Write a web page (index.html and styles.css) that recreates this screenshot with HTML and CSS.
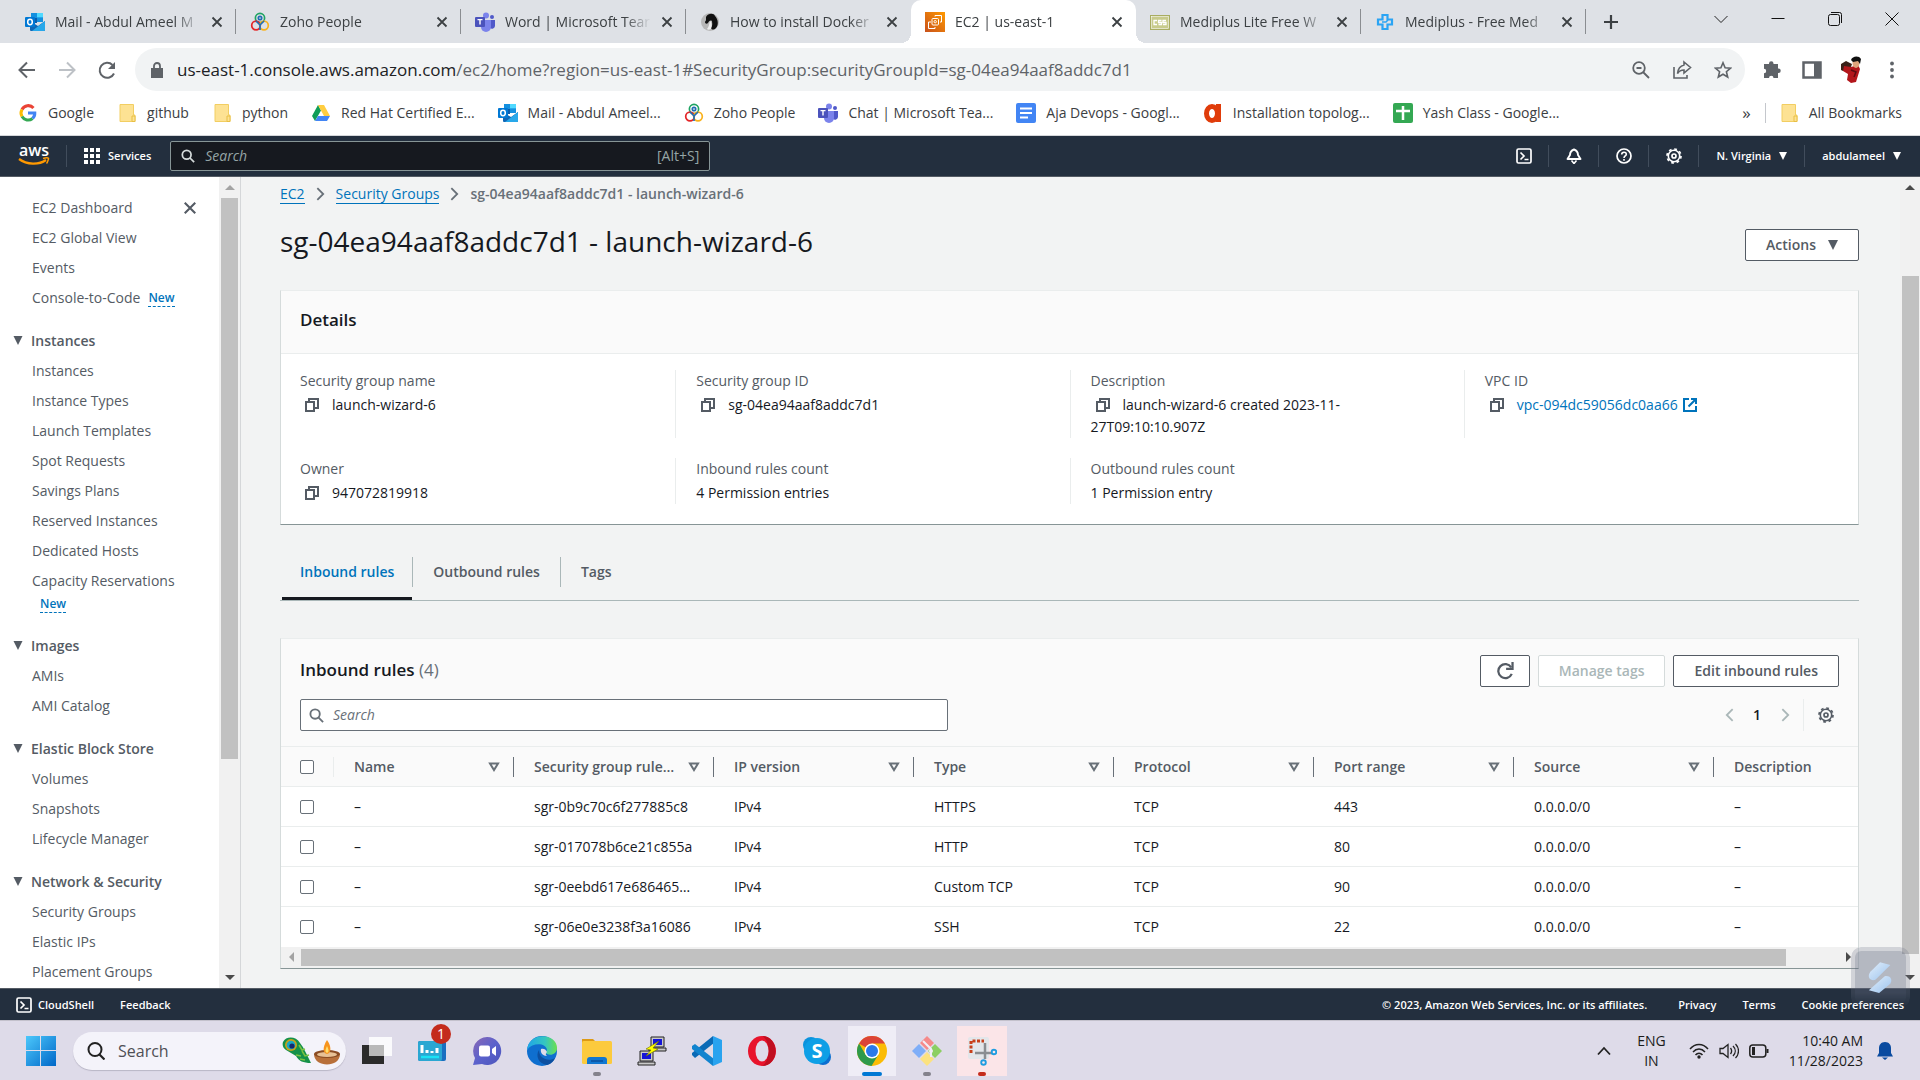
FILE: index.html
```
<!DOCTYPE html>
<html lang="en">
<head>
<meta charset="utf-8">
<meta name="viewport" content="width=device-width, initial-scale=1">
<title>EC2 | us-east-1</title>
<link rel="stylesheet" href="styles.css">
</head>
<body>
<svg class="sprite" aria-hidden="true">
  <symbol id="i-outlook" viewBox="0 0 20 20"><path fill="#1490df" d="M6 1h12v9H6z"/><path fill="#28a8ea" d="M12 1h6v5h-6z"/><path fill="#0a5cad" d="M6 6h6v5H6z"/><path fill="#50d9ff" d="M12 1h6v4h-6z"/><path fill="#1066b5" d="M5 9l8 5 7-5v9a1 1 0 0 1-1 1H6a1 1 0 0 1-1-1z"/><path fill="#28a8ea" d="M20 9v9a1 1 0 0 1-1 1H7z"/><rect x="0" y="5" width="10" height="10" rx="1" fill="#0078d4"/><ellipse cx="5" cy="10" rx="2.3" ry="2.7" fill="none" stroke="#fff" stroke-width="1.5"/></symbol>
  <symbol id="i-zoho" viewBox="0 0 20 20"><g fill="none" stroke-width="1.7"><circle cx="10" cy="6" r="4.6" stroke="#1fa463"/><circle cx="6" cy="13.5" r="4.3" stroke="#e42527"/><circle cx="14" cy="13.5" r="4.3" stroke="#f9b21d"/><circle cx="10" cy="6" r="1.7" stroke="#226db4"/><path d="M10 18v-6M10 13L6 9M10 13l4-4" stroke="#226db4"/></g></symbol>
  <symbol id="i-teams" viewBox="0 0 20 20"><circle cx="17" cy="5" r="2" fill="#5059c9"/><path fill="#5059c9" d="M14 8h6v6a3 3 0 0 1-5 2z"/><circle cx="11" cy="3.5" r="3" fill="#7b83eb"/><path fill="#7b83eb" d="M6 8h10v7a5 5 0 0 1-10 0z"/><rect y="5" width="10" height="10" rx="1" fill="#4b53bc"/><path d="M2.5 7.6h5M5 7.6v5" stroke="#fff" stroke-width="1.4"/></symbol>
  <symbol id="i-folder" viewBox="0 0 20 20"><path fill="#fde293" stroke="#f2ce62" d="M3 1.500h13.500V12L18 12v6.500H3z"/><path fill="#fde293" stroke="#e8bf45" d="M15 13h3v5.500h-3z"/></symbol>
  <symbol id="i-copy" viewBox="0 0 16 16"><g fill="none" stroke="#545b64" stroke-width="2"><path d="M2 5h8v9H2z"/><path d="M5 5V2h9v9h-4"/></g></symbol>
  <symbol id="i-shell" viewBox="0 0 16 16"><rect x="1" y="1" width="14" height="14" rx="1.500" fill="none" stroke="#fff" stroke-width="1.700"/><path d="M4.500 4.500L8 8l-3.500 3.500M8.500 11.500h4" fill="none" stroke="#fff" stroke-width="1.700"/></symbol>
  <symbol id="i-gear" viewBox="0 0 16 16"><g fill="none" stroke="currentColor"><circle cx="8" cy="8" r="5.700" stroke-width="1.600"/><circle cx="8" cy="8" r="7" stroke-width="1.700" stroke-dasharray="2.750 2.750"/><circle cx="8" cy="8" r="2" stroke-width="1.700"/></g></symbol>
  <symbol id="i-search" viewBox="0 0 16 16"><circle cx="6.500" cy="6.500" r="5" fill="none" stroke="currentColor" stroke-width="2"/><path d="M10 10l5 5" stroke="currentColor" stroke-width="2"/></symbol>
  <symbol id="i-x" viewBox="0 0 12 12"><path d="M1.500 1.500l9 9M10.500 1.500l-9 9" stroke="currentColor" stroke-width="1.800"/></symbol>
  <symbol id="i-down" viewBox="0 0 10 10"><path d="M0 0h10L5 10z" fill="currentColor"/></symbol>
  <symbol id="i-filter" viewBox="0 0 12 10"><path d="M2 1.500h8L6 8z" fill="none" stroke="#687078" stroke-width="2"/></symbol>
  <symbol id="i-chev" viewBox="0 0 10 16"><path d="M1.500 1.500L8 8l-6.500 6.500" fill="none" stroke="currentColor" stroke-width="2"/></symbol>
</svg>

<header class="browser">
  <div class="tabstrip">
    <div class="tab"><svg class="ic"><use href="#i-outlook"/></svg><span class="tab-title">Mail - Abdul Ameel M</span><button class="tab-x" aria-label="Close tab"><svg><use href="#i-x"/></svg></button></div>
    <div class="tab"><svg class="ic"><use href="#i-zoho"/></svg><span class="tab-title">Zoho People</span><button class="tab-x" aria-label="Close tab"><svg><use href="#i-x"/></svg></button></div>
    <div class="tab"><svg class="ic"><use href="#i-teams"/></svg><span class="tab-title">Word | Microsoft Tear</span><button class="tab-x" aria-label="Close tab"><svg><use href="#i-x"/></svg></button></div>
    <div class="tab before"><svg class="ic" viewBox="0 0 20 20"><circle cx="10" cy="10" r="9" fill="#b7b7b7"/><path d="M6 5c2-4 8-4 9-1 3 3 4 9 1 12-2 2-4 2-5 0 2-3 1-5 1-7-2-1-3 0-4 2-1 1-3 1-3-1 0-1 1-1 1-2z" fill="#111"/><path d="M10 9c2 1 2 5 1 8-2 1-3 1-4 0 2-2 2-5 3-8z" fill="#eee"/></svg><span class="tab-title">How to install Docker</span><button class="tab-x" aria-label="Close tab"><svg><use href="#i-x"/></svg></button></div>
    <div class="tab active"><svg class="ic" viewBox="0 0 20 20"><defs><linearGradient id="gaws" x1="0" y1="1" x2="1" y2="0"><stop stop-color="#c8511b"/><stop offset="1" stop-color="#f90"/></linearGradient></defs><path fill="url(#gaws)" d="M0 0h20v20H0z"/><g fill="none" stroke="#fff"><rect x="7" y="6.500" width="6.500" height="6.500" rx="1"/><path d="M10 4.500V3.500h6.500V10H15M6 10H3.500v6.500H10V15"/><circle cx="10.200" cy="9.700" r="1.200"/></g></svg><span class="tab-title">EC2 | us-east-1</span><button class="tab-x" aria-label="Close tab"><svg><use href="#i-x"/></svg></button></div>
    <div class="tab"><svg class="ic" viewBox="0 0 20 20"><rect y="3" width="20" height="15" fill="#a9ad62"/><rect x="1.500" y="4.500" width="17" height="12" fill="#c8cb8c" stroke="#fff" stroke-width=".6"/><path d="M7 8.500H4v4h3M11.500 8.500h-3v2h3v2h-3M16 8.500h-3v2h3v2h-3" fill="none" stroke="#fff" stroke-width="1.300"/></svg><span class="tab-title">Mediplus Lite Free W</span><button class="tab-x" aria-label="Close tab"><svg><use href="#i-x"/></svg></button></div>
    <div class="tab"><svg class="ic" viewBox="0 0 20 20"><path d="M7.500 3h5v4.500H17v5h-4.500V17h-5v-4.500H3v-5h4.500z" fill="none" stroke="#2aa4f4" stroke-width="2.200"/><path d="M7 10h4l2-2" fill="none" stroke="#2aa4f4" stroke-width="1.500"/></svg><span class="tab-title">Mediplus - Free Med</span><button class="tab-x" aria-label="Close tab"><svg><use href="#i-x"/></svg></button></div>
    <button class="newtab" aria-label="New tab"><svg width="16" height="16" viewBox="0 0 16 16"><path d="M8 1v14M1 8h14" stroke="#3c4043" stroke-width="2.200"/></svg></button>
    <div class="winctl">
      <button aria-label="Search tabs"><svg viewBox="0 0 14 14"><path d="M.5 4L7 10.500 13.500 4" fill="none" stroke="#222"/></svg></button>
      <button aria-label="Minimize"><svg viewBox="0 0 14 14"><path d="M.5 6.500h13" stroke="#111"/></svg></button>
      <button aria-label="Restore"><svg viewBox="0 0 14 14"><rect x=".5" y="2.500" width="11" height="11" rx="2" fill="none" stroke="#111"/><path d="M3 .5h8.500a2 2 0 0 1 2 2V11" fill="none" stroke="#111"/></svg></button>
      <button aria-label="Close"><svg viewBox="0 0 14 14"><path d="M.5 .5l13 13M13.500 .5l-13 13" stroke="#111"/></svg></button>
    </div>
  </div>

  <div class="toolbar">
    <button aria-label="Back"><svg width="18" height="18" viewBox="0 0 18 18"><path d="M17 9H2M9 1.500L1.500 9 9 16.500" fill="none" stroke="#5f6368" stroke-width="2"/></svg></button>
    <button aria-label="Forward"><svg width="18" height="18" viewBox="0 0 18 18"><path d="M1 9h15M9 1.500L16.500 9 9 16.500" fill="none" stroke="#bdc1c6" stroke-width="2"/></svg></button>
    <button aria-label="Reload"><svg width="20" height="20" viewBox="0 0 20 20"><path d="M17 13.500A7.500 7.500 0 1 1 15.500 5" fill="none" stroke="#5f6368" stroke-width="2"/><path d="M18 2v7h-7z" fill="#5f6368"/></svg></button>
    <div class="omnibox">
      <svg width="12" height="16" viewBox="0 0 12 16"><path d="M0 6h12v10H0z" fill="#5f6368"/><path d="M3 6V4a3 3 0 0 1 6 0v2" fill="none" stroke="#5f6368" stroke-width="1.800"/></svg>
      <p class="url"><b>us-east-1.console.aws.amazon.com</b>/ec2/home?region=us-east-1#SecurityGroup:securityGroupId=sg-04ea94aaf8addc7d1</p>
      <button aria-label="Zoom"><svg width="18" height="18" viewBox="0 0 18 18"><circle cx="7" cy="7" r="5.800" fill="none" stroke="#5f6368" stroke-width="1.800"/><path d="M11 11l6 6M4.500 7h5" stroke="#5f6368" stroke-width="1.800"/></svg></button>
      <button aria-label="Share"><svg width="20" height="20" viewBox="0 0 20 20"><path d="M2 7v11h13v-3" fill="none" stroke="#5f6368" stroke-width="1.600"/><path d="M12 2l6.500 5.500L12 13v-3c-3 0-5 1-6.500 3.500C6 9 8 6 12 5z" fill="none" stroke="#5f6368" stroke-width="1.600"/></svg></button>
      <button aria-label="Bookmark this tab"><svg width="18" height="18" viewBox="0 0 18 18"><path d="M9 1.800l2.100 5 5.400.4-4.100 3.500 1.300 5.300L9 13.200 4.300 16l1.300-5.300L1.500 7.200l5.400-.4z" fill="none" stroke="#5f6368" stroke-width="1.600"/></svg></button>
    </div>
    <button aria-label="Extensions"><svg width="20" height="20" viewBox="0 0 20 20"><path d="M7 3.500a2 2 0 0 1 4.500 0V4H16v4.500h.5a2.200 2.200 0 0 1 0 4.500H16V18h-4.500a2.200 2.200 0 0 0-4.500 0H2v-4.800a2 2 0 0 0 0-4.400V4h5z" fill="#5f6368"/></svg></button>
    <button aria-label="Side panel"><svg width="20" height="20" viewBox="0 0 20 20"><path d="M1.500 2.500h17v15h-17z" fill="#fff" stroke="#5f6368" stroke-width="2.500"/><path d="M12 2h7v16h-7z" fill="#5f6368"/></svg></button>
    <button aria-label="Profile"><svg width="26" height="28" viewBox="0 0 26 28"><path d="M3 10c3-2 7-1 9 1l7-2 2 4-4 13-5 1-4-3 1-6-5-3z" fill="#b3161b"/><path d="M2 8l5-3 6 3-1 3-7-1-1 5-2-1z" fill="#3a2018"/><ellipse cx="17" cy="7" rx="3.500" ry="5" fill="#e0a57c"/><path d="M12 4c1-4 8-5 10-1l-1 5-2-3-5 1z" fill="#111"/><path d="M12 14l5 2-2 5" fill="none" stroke="#5d0b10" stroke-width="1.500"/></svg></button>
    <button aria-label="Menu"><svg width="6" height="18" viewBox="0 0 6 18"><g fill="#5f6368"><circle cx="3" cy="2.500" r="1.900"/><circle cx="3" cy="9" r="1.900"/><circle cx="3" cy="15.500" r="1.900"/></g></svg></button>
  </div>

  <nav class="bookmarks" aria-label="Bookmarks">
    <a href="#"><svg class="ic" viewBox="0 0 20 20"><g fill="none" stroke-width="3"><path d="M15.500 5A7 7 0 0 0 4 6.500" stroke="#ea4335"/><path d="M4 6.500a7 7 0 0 0 0 7" stroke="#fbbc05"/><path d="M4 13.500a7 7 0 0 0 10.500 2" stroke="#34a853"/><path d="M14.500 15.500A7 7 0 0 0 16.800 10H10" stroke="#4285f4"/></g></svg>Google</a>
    <a href="#"><svg class="ic"><use href="#i-folder"/></svg>github</a>
    <a href="#"><svg class="ic"><use href="#i-folder"/></svg>python</a>
    <a href="#"><svg class="ic" viewBox="0 0 20 20"><path fill="#0f9d58" d="M7 2l3 5.500L4 18l-3-5z"/><path fill="#ffcd40" d="M7 2h6l6 11h-6z"/><path fill="#4285f4" d="M7 13h12l-3 5H4z"/></svg>Red Hat Certified E...</a>
    <a href="#"><svg class="ic"><use href="#i-outlook"/></svg>Mail - Abdul Ameel...</a>
    <a href="#"><svg class="ic"><use href="#i-zoho"/></svg>Zoho People</a>
    <a href="#"><svg class="ic"><use href="#i-teams"/></svg>Chat | Microsoft Tea...</a>
    <a href="#"><svg class="ic" viewBox="0 0 20 20"><rect width="20" height="20" rx="2" fill="#4285f4"/><path d="M4 5.500h12M4 10h12M4 14.500h8" stroke="#fff" stroke-width="2"/></svg>Aja Devops - Googl...</a>
    <a href="#"><svg class="ic" viewBox="0 0 20 20"><ellipse cx="9" cy="10.500" rx="5.500" ry="7" fill="none" stroke="#e03c0a" stroke-width="5"/><path d="M13 1h5v18h-5z" fill="#e03c0a"/></svg>Installation topolog...</a>
    <a href="#"><svg class="ic" viewBox="0 0 20 20"><rect width="20" height="20" rx="2" fill="#34a853"/><path d="M10 3v14M3 8h14" stroke="#fff" stroke-width="2.500"/></svg>Yash Class - Google...</a>
    <button class="more" aria-label="More bookmarks">»</button>
    <a class="all" href="#"><svg class="ic"><use href="#i-folder"/></svg>All Bookmarks</a>
  </nav>
</header>

<div class="console">
  <header class="awsbar">
    <a class="logo" href="#" aria-label="AWS"><svg width="32" height="24" viewBox="0 0 32 24"><text x="16" y="12" text-anchor="middle" class="logo-text">aws</text><path d="M1 15c8 6 20 6 27 1" fill="none" stroke="#f90" stroke-width="2.200"/><path d="M25 14.500c3-1 6-1 5.500.5s-1 3.500-2 4.500" fill="none" stroke="#f90" stroke-width="1.500"/></svg></a>
    <button class="services"><svg width="16" height="16" viewBox="0 0 16 16"><path d="M0 0h4v4H0zM6 0h4v4H6zM12 0h4v4h-4zM0 6h4v4H0zM6 6h4v4H6zM12 6h4v4h-4zM0 12h4v4H0zM6 12h4v4H6zM12 12h4v4h-4z" fill="#fff"/></svg>Services</button>
    <label class="awssearch"><svg width="14" height="14"><use href="#i-search"/></svg><input type="search" placeholder="Search" aria-label="Search"><span>[Alt+S]</span></label>
    <div class="awsright">
      <button class="sq" aria-label="CloudShell"><svg><use href="#i-shell"/></svg></button>
      <button class="sq" aria-label="Notifications"><svg viewBox="0 0 16 16"><path d="M8 1.500c-3 1-4 3-4 5.500L1.500 11h13L12 7c0-2.500-1-4.500-4-5.500z" fill="none" stroke="#fff" stroke-width="1.900" stroke-linejoin="round"/><path d="M5.500 12.500L8 15.500l2.500-3" fill="none" stroke="#fff" stroke-width="1.600"/></svg></button>
      <button class="sq" aria-label="Help"><svg viewBox="0 0 16 16"><circle cx="8" cy="8" r="7" fill="none" stroke="#fff" stroke-width="1.700"/><path d="M5.700 6.500C5.700 3.500 10.300 3.500 10.300 6.300 10.300 8 8 8 8 10M8 11v1.800" fill="none" stroke="#fff" stroke-width="1.600"/></svg></button>
      <button class="sq" aria-label="Settings"><svg><use href="#i-gear"/></svg></button>
      <button class="drop region">N. Virginia<svg><use href="#i-down"/></svg></button>
      <button class="drop">abdulameel<svg><use href="#i-down"/></svg></button>
    </div>
  </header>

  <div class="middle">
    <aside class="sidebar">
      <nav class="side-nav" aria-label="EC2">
        <ul>
          <li class="top"><a href="#">EC2 Dashboard</a><button aria-label="Close navigation"><svg><use href="#i-x"/></svg></button></li>
          <li><a href="#">EC2 Global View</a></li>
          <li><a href="#">Events</a></li>
          <li><a href="#">Console-to-Code</a><a class="new" href="#">New</a></li>
        </ul>
        <h2><svg><use href="#i-down"/></svg>Instances</h2>
        <ul>
          <li><a href="#">Instances</a></li>
          <li><a href="#">Instance Types</a></li>
          <li><a href="#">Launch Templates</a></li>
          <li><a href="#">Spot Requests</a></li>
          <li><a href="#">Savings Plans</a></li>
          <li><a href="#">Reserved Instances</a></li>
          <li><a href="#">Dedicated Hosts</a></li>
          <li><a href="#">Capacity Reservations</a></li>
          <li class="second"><a class="new" href="#">New</a></li>
        </ul>
        <h2><svg><use href="#i-down"/></svg>Images</h2>
        <ul>
          <li><a href="#">AMIs</a></li>
          <li><a href="#">AMI Catalog</a></li>
        </ul>
        <h2><svg><use href="#i-down"/></svg>Elastic Block Store</h2>
        <ul>
          <li><a href="#">Volumes</a></li>
          <li><a href="#">Snapshots</a></li>
          <li><a href="#">Lifecycle Manager</a></li>
        </ul>
        <h2><svg><use href="#i-down"/></svg>Network &amp; Security</h2>
        <ul>
          <li><a href="#">Security Groups</a></li>
          <li><a href="#">Elastic IPs</a></li>
          <li><a href="#">Placement Groups</a></li>
        </ul>
      </nav>
      <div class="vbar side-bar"><i class="arrow up dim"></i><i class="thumb"></i><i class="rest"></i><i class="arrow down"></i></div>
    </aside>

    <main>
      <nav class="crumbs" aria-label="Breadcrumb"><a href="#">EC2</a><svg><use href="#i-chev"/></svg><a href="#">Security Groups</a><svg><use href="#i-chev"/></svg><b>sg-04ea94aaf8addc7d1 - launch-wizard-6</b></nav>
      <div class="title-row">
        <h1>sg-04ea94aaf8addc7d1 - launch-wizard-6</h1>
        <button class="btn">Actions<svg><use href="#i-down"/></svg></button>
      </div>

      <section class="card">
        <h2 class="card-head">Details</h2>
        <dl class="details">
          <div><dt>Security group name</dt><dd><svg class="copy"><use href="#i-copy"/></svg>launch-wizard-6</dd></div>
          <div><dt>Security group ID</dt><dd><svg class="copy"><use href="#i-copy"/></svg>sg-04ea94aaf8addc7d1</dd></div>
          <div><dt>Description</dt><dd><svg class="copy"><use href="#i-copy"/></svg>launch-wizard-6 created 2023-11-<br>27T09:10:10.907Z</dd></div>
          <div><dt>VPC ID</dt><dd><svg class="copy"><use href="#i-copy"/></svg><a href="#">vpc-094dc59056dc0aa66<svg class="ext" viewBox="0 0 14 14"><path d="M6 1H1v12h12V8" fill="none" stroke="#0073bb" stroke-width="2"/><path d="M8 1h5v5M13 1L5.500 8.500" fill="none" stroke="#0073bb" stroke-width="2"/></svg></a></dd></div>
          <div><dt>Owner</dt><dd><svg class="copy"><use href="#i-copy"/></svg>947072819918</dd></div>
          <div><dt>Inbound rules count</dt><dd>4 Permission entries</dd></div>
          <div><dt>Outbound rules count</dt><dd>1 Permission entry</dd></div>
        </dl>
      </section>

      <div class="tabs" role="tablist">
        <button role="tab" aria-selected="true" class="on">Inbound rules</button><i></i>
        <button role="tab" aria-selected="false">Outbound rules</button><i></i>
        <button role="tab" aria-selected="false">Tags</button>
      </div>

      <section class="card rules">
        <div class="rules-head">
          <div class="line">
            <h2>Inbound rules <span>(4)</span></h2>
            <div class="actions">
              <button class="btn icon" aria-label="Refresh"><svg viewBox="0 0 16 16"><path d="M14 10.500A6.200 6.200 0 1 1 13.500 4.800" fill="none" stroke="#545b64" stroke-width="2"/><path d="M14.700 0v6H9" fill="none" stroke="#545b64" stroke-width="2"/></svg></button>
              <button class="btn" disabled>Manage tags</button>
              <button class="btn">Edit inbound rules</button>
            </div>
          </div>
          <div class="line">
            <label class="filter"><svg><use href="#i-search"/></svg><input type="search" placeholder="Search" aria-label="Search rules"></label>
            <div class="pager">
              <button aria-label="Previous page"><svg class="prev"><use href="#i-chev"/></svg></button>
              <b>1</b>
              <button aria-label="Next page"><svg><use href="#i-chev"/></svg></button>
              <button class="prefs" aria-label="Preferences"><svg><use href="#i-gear"/></svg></button>
            </div>
          </div>
        </div>
        <table>
          <colgroup><col class="c-check"><col class="c-name"><col class="c"><col class="c"><col class="c"><col class="c"><col class="c"><col class="c"><col></colgroup>
          <thead><tr>
            <th><div class="first"><input type="checkbox" aria-label="Select all rules"></div></th>
            <th><div><span>Name</span><svg><use href="#i-filter"/></svg></div></th>
            <th><div><span>Security group rule…</span><svg><use href="#i-filter"/></svg></div></th>
            <th><div><span>IP version</span><svg><use href="#i-filter"/></svg></div></th>
            <th><div><span>Type</span><svg><use href="#i-filter"/></svg></div></th>
            <th><div><span>Protocol</span><svg><use href="#i-filter"/></svg></div></th>
            <th><div><span>Port range</span><svg><use href="#i-filter"/></svg></div></th>
            <th><div><span>Source</span><svg><use href="#i-filter"/></svg></div></th>
            <th><div class="last"><span>Description</span></div></th>
          </tr></thead>
          <tbody>
            <tr><td><input type="checkbox" aria-label="Select sgr-0b9c70c6f277885c8"></td><td>–</td><td>sgr-0b9c70c6f277885c8</td><td>IPv4</td><td>HTTPS</td><td>TCP</td><td>443</td><td>0.0.0.0/0</td><td>–</td></tr>
            <tr><td><input type="checkbox" aria-label="Select sgr-017078b6ce21c855a"></td><td>–</td><td>sgr-017078b6ce21c855a</td><td>IPv4</td><td>HTTP</td><td>TCP</td><td>80</td><td>0.0.0.0/0</td><td>–</td></tr>
            <tr><td><input type="checkbox" aria-label="Select sgr-0eebd617e686465"></td><td>–</td><td>sgr-0eebd617e686465…</td><td>IPv4</td><td>Custom TCP</td><td>TCP</td><td>90</td><td>0.0.0.0/0</td><td>–</td></tr>
            <tr><td><input type="checkbox" aria-label="Select sgr-06e0e3238f3a16086"></td><td>–</td><td>sgr-06e0e3238f3a16086</td><td>IPv4</td><td>SSH</td><td>TCP</td><td>22</td><td>0.0.0.0/0</td><td>–</td></tr>
          </tbody>
        </table>
        <div class="hbar"><i class="arrow left dim"></i><i class="thumb"></i><i class="rest"></i><i class="arrow right"></i></div>
      </section>
    </main>
    <div class="vbar page-bar"><i class="arrow up"></i><i class="lead"></i><i class="thumb"></i><i class="rest"></i><i class="arrow down"></i></div>
  </div>

  <footer class="awsfoot">
    <a href="#"><svg><use href="#i-shell"/></svg>CloudShell</a>
    <a href="#">Feedback</a>
    <span class="copyright">© 2023, Amazon Web Services, Inc. or its affiliates.</span>
    <a href="#">Privacy</a>
    <a href="#">Terms</a>
    <a href="#">Cookie preferences</a>
  </footer>
  <div class="floater"><svg viewBox="0 0 30 36"><defs><linearGradient id="gfl" x1="0" y1="0" x2="1" y2="1"><stop stop-color="#e2effb"/><stop offset="1" stop-color="#9cc3ee"/></linearGradient></defs><path d="M14 1l11 3L9 20C1 22 0 14 5 10z" fill="url(#gfl)"/><path d="M13 34L2 31l17-15c7-1 9 5 5 9z" fill="url(#gfl)"/></svg></div>
</div>

<footer class="taskbar">
  <button class="app start" aria-label="Start"><svg width="30" height="30" viewBox="0 0 30 30"><defs><linearGradient id="gwin" x1="0" y1="0" x2="1" y2="1"><stop stop-color="#4cc8fb"/><stop offset="1" stop-color="#0067c8"/></linearGradient></defs><path d="M0 0h14v14H0zM15 0h15v14H15zM0 15h14v15H0zM15 15h15v15H15z" fill="url(#gwin)"/></svg></button>
  <label class="tasksearch"><svg width="18" height="18" viewBox="0 0 18 18"><circle cx="8" cy="7.500" r="6.500" fill="none" stroke="#222" stroke-width="2"/><path d="M12.500 12.500l5 5" stroke="#222" stroke-width="2.200"/></svg><input type="search" placeholder="Search" aria-label="Windows search">
    <svg width="60" height="28" viewBox="0 0 60 28"><path d="M1 5C4-1 14-1 18 6c4 5 7 12 11 20-8 0-12-2-15-7L4 13C1 11 0 8 1 5z" fill="#15914a"/><path d="M17 8l3 5 3-1M20 14l3 5 4-1M14 18l5 1M18 22l5 1" stroke="#7cc243" stroke-width="1.500" fill="none"/><circle cx="9" cy="8" r="6" fill="#c6a21c"/><circle cx="9" cy="8" r="4.300" fill="#18a7c4"/><circle cx="10" cy="9" r="2.600" fill="#16286f"/><path d="M32 17c0 14 26 14 26 0z" fill="#b8703a"/><ellipse cx="45" cy="17" rx="13" ry="4" fill="#8a4b22"/><ellipse cx="45" cy="17.500" rx="10" ry="2.500" fill="#e8c195"/><path d="M45 3c5 7 4 13 0 14-4-1-5-6 0-14z" fill="#f7941d"/><path d="M45 9c2 4 2 6 0 7-2-1-2-3 0-7z" fill="#ffdf6b"/></svg></label>
  <div class="apps">
    <button class="app" aria-label="Task view"><svg viewBox="0 0 30 30"><path d="M0 9h22v19H0z" fill="#2b2b2b"/><path d="M7 1h23v19H7z" fill="#fff" fill-opacity=".85"/><path d="M7 9h15v11H7z" fill="#b9b9b9"/></svg></button>
    <button class="app" aria-label="Widgets"><svg viewBox="0 0 30 30"><rect x="1" y="5" width="28" height="20" rx="2" fill="#1a6fc0"/><rect x="1" y="5" width="24" height="20" rx="2" fill="#2aa7d2"/><path d="M5 9v8M10 14v3M15 15v2M20 12v5" stroke="#fff" stroke-width="3"/><path d="M4 21h18" stroke="#19e2f5" stroke-width="2.500"/></svg><span class="badge">1</span></button>
    <button class="app" aria-label="Chat"><svg viewBox="0 0 30 30"><defs><linearGradient id="gchat" x1="0" y1="0" x2="1" y2="1"><stop stop-color="#8b68b4"/><stop offset=".5" stop-color="#5b62cc"/><stop offset="1" stop-color="#4d55bb"/></linearGradient></defs><path d="M15 1a14 14 0 1 1-5 27l-9 1 2-7A14 14 0 0 1 15 1z" fill="url(#gchat)"/><rect x="7" y="9.500" width="11" height="11" rx="2" fill="#fff"/><path d="M20 13l4-3v10l-4-3z" fill="#fff"/></svg></button>
    <button class="app" aria-label="Edge"><svg viewBox="0 0 30 30"><defs><linearGradient id="gedge" x1="0" y1="0" x2="1" y2="0"><stop stop-color="#1fa6e8"/><stop offset=".6" stop-color="#35c6c0"/><stop offset="1" stop-color="#6be04f"/></linearGradient></defs><circle cx="15" cy="15" r="15" fill="#0f6fcf"/><path d="M0 14C2-5 30-3 30 12c0 6-6 8-10 6-2-1-1-2 0-4-1-7-14-8-20 0z" fill="url(#gedge)"/><path d="M12 14c-4 6 0 14 8 15 4-1 7-4 8-7-6 4-16 1-16-8z" fill="#0c4fa0"/><path d="M14 13c-1 4 2 7 6 7-1-1-2-2 0-4-1-3-4-4-6-3z" fill="#dedbe9"/></svg></button>
    <button class="app run" aria-label="File Explorer"><svg viewBox="0 0 30 30"><path d="M0 3h11l3 3v6H0z" fill="#dd9a16"/><rect y="5" width="30" height="23" rx="1.500" fill="#fcca3d"/><path d="M5 28v-4a3 3 0 0 1 3-3h14a3 3 0 0 1 3 3v4z" fill="#1177d1"/><path d="M9 25h12" stroke="#0a4f9c" stroke-width="1.500"/></svg></button>
    <button class="app" aria-label="PuTTY"><svg viewBox="0 0 30 30"><g stroke="#222" fill="#c9c9c9"><path d="M14 1h13v10H14zM12 12h17v3H12z"/><path d="M3 15h13v10H3zM1 26h17v3H1z"/></g><path d="M16 3h9v6h-9zM5 17h9v6H5z" fill="#1414d8"/><path d="M22 5L9 13l5 1-5 6 12-7-5-1z" fill="#ff0" stroke="#6b6b00" stroke-width=".6"/></svg></button>
    <button class="app" aria-label="Visual Studio Code"><svg viewBox="0 0 30 30"><path d="M22 7L3 22l-3-3V17L21 0z" fill="#0a6ab6"/><path d="M22 23L3 8 0 10v3l21 17z" fill="#1184cf"/><path d="M21 0l9 4v22l-9 4z" fill="#29a3ef"/></svg></button>
    <button class="app" aria-label="Opera"><svg viewBox="0 0 30 30"><ellipse cx="15" cy="15" rx="14" ry="15" fill="#e8142c"/><path d="M15 0c18 0 18 30 0 30 8-4 9-26 0-30z" fill="#c00f20"/><ellipse cx="15" cy="15" rx="6.500" ry="10.500" fill="#dedbe9"/></svg></button>
    <button class="app" aria-label="Skype"><svg viewBox="0 0 30 30"><circle cx="9" cy="9" r="8" fill="#0b93dd"/><circle cx="21" cy="21" r="8" fill="#0b6fd0"/><circle cx="15" cy="15" r="13" fill="#0e9fe6"/><text x="15" y="22" text-anchor="middle" class="skype">S</text></svg></button>
    <button class="app run cur" aria-label="Chrome"><svg viewBox="0 0 30 30"><circle cx="15" cy="15" r="15" fill="#fbbc05"/><path d="M15 15L2 7.500A15 15 0 0 1 28 7.500H15z" fill="#dc4437"/><path d="M2 7.500A15 15 0 0 0 14.500 30L21.500 18.500 15 21.500 8.500 18.500z" fill="#2f9a4b"/><circle cx="15" cy="15" r="7.500" fill="#fff"/><circle cx="15" cy="15" r="6" fill="#2b79ea"/></svg></button>
    <button class="app run" aria-label="Git Bash"><svg viewBox="0 0 30 30"><path d="M15 0l7 7-7 7-7-7z" fill="#f58a8a"/><path d="M23 8l7 7-7 7-7-7z" fill="#8ccf63"/><path d="M15 16l7 7-7 7-7-7z" fill="#fbe281"/><path d="M7 8l7 7-7 7-7-7z" fill="#7faef8"/><path d="M11 5l8 8v8" fill="none" stroke="#f1eef6" stroke-width="2"/><circle cx="19" cy="15" r="2" fill="#f1eef6"/></svg></button>
    <button class="app run red" aria-label="Snipping Tool"><svg viewBox="0 0 30 30"><rect x="1" y="1" width="21" height="22" rx="2" fill="#e3e6ea"/><path d="M4 17V5h13" fill="none" stroke="#c8401a" stroke-width="3" stroke-dasharray="3 1.500"/><path d="M18 7v16M8 17h17" stroke="#8a8d91" stroke-width="2.500"/><g fill="none" stroke="#1f9de0" stroke-width="1.900"><circle cx="27" cy="16" r="2.300"/><circle cx="16.500" cy="26.500" r="2.300"/></g></svg></button>
  </div>
  <div class="tray">
    <button aria-label="Show hidden icons"><svg width="14" height="10" viewBox="0 0 14 10"><path d="M1 8.500L7 2l6 6.500" fill="none" stroke="#222" stroke-width="1.800"/></svg></button>
    <span class="lang">ENG<br>IN</span>
    <div class="status">
      <svg width="20" height="18" viewBox="0 0 20 18"><g fill="none" stroke="#222" stroke-width="1.500"><path d="M1 7c5-6 13-6 18 0M4 10c3.500-4 8.500-4 12 0M6.500 13c2-2.500 5-2.500 7 0"/></g><circle cx="10" cy="15" r="1.700" fill="#222"/></svg>
      <svg width="20" height="18" viewBox="0 0 20 18"><g fill="none" stroke="#222" stroke-width="1.300"><path d="M1 6.500h3L9 2.500v13l-5-4H1zM11.500 6c1.500 2 1.500 4 0 6M14 4c3 3 3 7 0 10M16.500 2c4 4 4 10 0 14"/></g></svg>
      <svg width="20" height="14" viewBox="0 0 20 14"><rect x=".8" y="1" width="16" height="12" rx="3" fill="none" stroke="#222" stroke-width="1.500"/><path d="M3 3h3v8H3zM17.500 5h2v4h-2z" fill="#222"/></svg>
    </div>
    <span class="clock">10:40 AM<br>11/28/2023</span>
    <button aria-label="Notifications"><svg width="16" height="18" viewBox="0 0 16 18"><path d="M8 0c4 0 6 3 6 6v5l2 3.500H0L2 11V6c0-3 2-6 6-6zM5 15.500h6L8 18z" fill="#0a4ba0"/></svg></button>
  </div>
</footer>
</body>
</html>
```
FILE: styles.css
```
* { box-sizing: border-box; }
body {
  margin: 0;
  min-height: 100vh;
  display: flex;
  flex-direction: column;
  font: 14px/22px "Open Sans", "Noto Sans", sans-serif;
  color: #16191f;
}
button, input { font: inherit; color: inherit; }
button { border: 0; background: none; padding: 0; display: flex; align-items: center; justify-content: center; }
a { color: #0073bb; text-decoration: none; }
h1, h2, ul, dl, dd, p { margin: 0; padding: 0; }
ul { list-style: none; }
svg { flex: none; display: block; }
input[type="search"] { appearance: none; border: 0; outline: 0; background: none; padding: 0; min-width: 0; }
.sprite { display: none; }
.ic { width: 20px; height: 20px; }

/* Browser chrome */
.tabstrip { display: flex; height: 43px; padding-left: 11px; background: #dee1e6; color: #3c4043; }
.tab { position: relative; display: flex; align-items: center; gap: 10px; width: 225px; flex: 0 1 225px; min-width: 0; padding: 0 13px 0 14px; }
.tab::after { content: ""; position: absolute; right: 0; top: 9px; width: 1px; height: 25px; background: #8a8d91; }
.tab.before::after { display: none; }
.tab-title { flex: 1; min-width: 0; margin-right: -4px; white-space: nowrap; overflow: hidden; -webkit-mask-image: linear-gradient(90deg, #000 calc(100% - 30px), transparent calc(100% - 4px)); mask-image: linear-gradient(90deg, #000 calc(100% - 30px), transparent calc(100% - 4px)); }
.tab-x { width: 12px; height: 12px; }
.tab-x svg { width: 12px; height: 12px; }
.tab.active { background: #fff; border-radius: 10px 10px 0 0; }
.tab.active::before, .tab.active::after { content: ""; position: absolute; top: auto; bottom: 0; width: 10px; height: 10px; background: radial-gradient(circle at 0 0, transparent 10px, #fff 10px); }
.tab.active::before { left: -10px; }
.tab.active::after { right: -10px; background: radial-gradient(circle at 100% 0, transparent 10px, #fff 10px); }
.newtab { width: 50px; }
.winctl { display: flex; margin-left: auto; height: 38px; }
.winctl button { width: 57px; }
.winctl svg { width: 14px; height: 14px; }
.toolbar { display: flex; align-items: center; height: 53px; padding: 0 8px 0 7px; background: #fff; }
.toolbar > button { width: 40px; height: 40px; }
.omnibox { flex: 1; min-width: 0; display: flex; align-items: center; height: 43px; margin: 0 7px 0 8px; padding: 0 2px 0 16px; border-radius: 22px; background: #f1f3f4; }
.omnibox button { width: 41px; height: 40px; }
.url { flex: 1; min-width: 0; margin-left: 14px; overflow: hidden; white-space: nowrap; font-size: 17px; color: #5f6368; }
.url b { font-weight: 400; color: #202124; }
.bookmarks { display: flex; align-items: center; gap: 23px; height: 40px; padding: 0 18px 6px; background: #fff; border-bottom: 1px solid #d5d7da; overflow: hidden; }
.bookmarks a { display: flex; align-items: center; gap: 10px; color: #3c4043; white-space: nowrap; }
.bookmarks .more { margin-left: auto; font-size: 17px; color: #3c4043; }
.bookmarks .all { border-left: 1px solid #c4c7cc; padding-left: 13px; margin-left: -9px; height: 20px; }

/* AWS top bar */
.console { position: relative; flex: 1; display: flex; flex-direction: column; font-size: 14px; }
.awsbar { display: flex; align-items: center; height: 41px; background: #232f3e; border-bottom: 1px solid #545b64; color: #fff; font-size: 11px; font-weight: 600; }
.logo { display: flex; align-items: center; width: 67px; height: 22px; padding-left: 18px; border-right: 1px solid #414d5c; }
.logo-text { font: 600 16px "Open Sans", sans-serif; fill: #fff; }
.services { gap: 8px; margin: 0 19px 0 17px; }
.awssearch { display: flex; align-items: center; gap: 10px; flex: 0 1 540px; height: 30px; padding: 0 10px; background: #16191f; border: 1px solid #879596; border-radius: 2px; color: #d5dbdb; }
.awssearch input { flex: 1; font-size: 14px; font-weight: 400; font-style: italic; }
.awssearch input::placeholder { color: #95a5a6; opacity: 1; }
.awssearch span { color: #95a5a6; font-size: 14px; font-weight: 400; }
.awsright { display: flex; align-items: center; margin-left: auto; padding-right: 2px; }
.awsright button { height: 22px; border-right: 1px solid #414d5c; }
.sq { width: 50px; }
.sq svg { width: 16px; height: 16px; }
.drop { gap: 8px; padding: 0 17px; }
.drop svg { width: 8px; height: 8px; }
.awsright .drop:last-child { border: 0; }

/* Body of the console */
.middle { flex: 1; display: flex; background: #f2f3f3; }
.sidebar { display: flex; flex: 0 0 241px; background: #fff; border-right: 1px solid #d5d7d9; }
.side-nav { flex: 1; padding: 16px 0 0 13px; color: #545b64; }
.side-nav li { display: flex; align-items: center; height: 30px; padding-left: 19px; white-space: nowrap; }
.side-nav li a { color: #545b64; }
.side-nav .top { justify-content: space-between; padding-right: 22px; }
.side-nav .top svg { width: 14px; height: 14px; color: #545b64; }
.side-nav h2 { display: flex; align-items: center; gap: 8px; height: 31px; margin-top: 12px; font-size: 14px; font-weight: 600; white-space: nowrap; }
.side-nav h2 svg { width: 10px; height: 9px; }
.side-nav li .new { margin-left: 8px; color: #0073bb; font-size: 12px; font-weight: 600; line-height: 16px; border-bottom: 1px dashed #0073bb; }
.side-nav .second { height: 22px; align-items: flex-start; }
.vbar { display: flex; flex-direction: column; align-items: center; background: #f1f1f1; }
.side-bar { width: 21px; }
.page-bar { width: 20px; flex: none; }
.vbar .arrow { height: 21px; width: 100%; }
.arrow { display: flex; align-items: center; justify-content: center; color: #4a4a4a; }
.arrow.dim { color: #a3a3a3; }
.arrow::after { content: ""; border: 5px solid transparent; }
.arrow.up::after { border-top: 0; border-bottom-color: currentColor; }
.arrow.down::after { border-bottom: 0; border-top-color: currentColor; }
.arrow.left::after { border-left: 0; border-right-color: currentColor; }
.arrow.right::after { border-right: 0; border-left-color: currentColor; }
.thumb { background: #c1c1c1; }
.vbar .thumb { width: 17px; }
.side-bar .thumb { flex: 562; }
.side-bar .rest { flex: 208; }
.page-bar .lead { flex: 78; }
.page-bar .thumb { flex: 679; }
.page-bar .rest { flex: 13; }

main { flex: 1; min-width: 0; padding: 6px 41px 16px 39px; }
.crumbs { display: flex; align-items: center; gap: 11px; height: 22px; color: #687078; }
.crumbs a { line-height: 18px; border-bottom: 1px solid #0073bb; }
.crumbs svg { width: 9px; height: 16px; }
.crumbs b { font-weight: 600; }
.title-row { display: flex; align-items: flex-end; justify-content: space-between; height: 56px; margin-bottom: 29px; }
h1 { font-size: 28px; line-height: 36px; font-weight: 400; padding-bottom: 2px; }
.btn { height: 32px; padding: 0 20px; border: 1px solid #545b64; border-radius: 2px; background: #fff; color: #545b64; font-weight: 600; gap: 12px; white-space: nowrap; }
.btn svg { width: 10px; height: 10px; }
.btn:disabled { border-color: #d5dbdb; color: #aab7b8; }
.card { background: #fff; border: 1px solid #d5dbdb; border-top-color: #eaeded; border-bottom-color: #879596; }
.card-head { padding: 18px 19px; height: 63px; background: #fafafa; border-bottom: 1px solid #eaeded; font-size: 17px; line-height: 22px; font-weight: 600; }
.details { display: grid; grid-template-columns: repeat(4, 1fr); row-gap: 20px; padding: 16px 0 20px; }
.details > div { padding: 0 20px; border-left: 1px solid #eaeded; }
.details > div:nth-child(4n+1) { border-left: 0; padding-left: 19px; }
.details dt { color: #545b64; margin-bottom: 2px; }
.copy { display: inline-block; width: 16px; height: 16px; margin: 0 12px 0 4px; vertical-align: -3px; }
.ext { display: inline-block; width: 14px; height: 14px; margin-left: 5px; vertical-align: -2px; }
.tabs { display: flex; align-items: flex-end; height: 76px; border-bottom: 1px solid #aab7b8; margin-bottom: 37px; padding-left: 2px; }
.tabs button { height: 56px; padding: 0 18px; border-top: 3px solid transparent; border-bottom: 3px solid transparent; color: #545b64; font-weight: 600; }
.tabs .on { color: #0073bb; border-bottom-color: #16191f; }
.tabs button:not(.on) { padding: 0 20px; }
.tabs i { width: 1px; height: 30px; margin-bottom: 13px; background: #aab7b8; }

.rules-head { padding: 16px 19px 15px; display: flex; flex-direction: column; gap: 12px; background: #fafafa; }
.line { display: flex; justify-content: space-between; align-items: center; height: 32px; }
.line h2 { font-size: 17px; line-height: 22px; font-weight: 600; padding-bottom: 2px; }
.line h2 span { color: #687078; font-weight: 400; }
.actions { display: flex; gap: 8px; }
.btn.icon { width: 50px; padding: 0; }
.btn.icon svg { width: 18px; height: 18px; }
.filter { display: flex; align-items: center; gap: 9px; flex: 0 1 648px; height: 32px; padding: 0 8px; border: 1px solid #687078; border-radius: 2px; background: #fff; color: #687078; }
.filter svg { width: 15px; height: 15px; }
.filter input { flex: 1; font-style: italic; }
.filter input::placeholder { color: #687078; opacity: 1; }
.pager { display: flex; align-items: center; }
.pager button, .pager b { width: 28px; height: 32px; text-align: center; line-height: 32px; font-weight: 600; color: #aab7b8; }
.pager b { color: #16191f; }
.pager svg { width: 9px; height: 16px; }
.pager .prev { transform: scaleX(-1); }
.pager .prefs { width: 36px; margin-left: 4px; padding-left: 8px; border-left: 1px solid #eaeded; color: #545b64; }
.pager .prefs svg { width: 16px; height: 16px; }
table { width: 100%; table-layout: fixed; border-collapse: collapse; }
.c-check { width: 53px; }
.c-name { width: 180px; }
.c { width: 200px; }
th { height: 40px; padding: 0; background: #fafafa; border-top: 1px solid #eaeded; border-bottom: 1px solid #eaeded; text-align: left; font-weight: 600; color: #545b64; }
th div { display: flex; align-items: center; justify-content: space-between; height: 20px; padding: 0 13px 0 20px; border-right: 1px solid #687078; white-space: nowrap; }
th .first { border-color: #eaeded; padding-left: 19px; }
th .last { border: 0; }
th svg { width: 12px; height: 10px; }
td { height: 40px; padding: 0 0 0 20px; border-bottom: 1px solid #eaeded; white-space: nowrap; overflow: hidden; }
td:first-child { padding-left: 19px; }
tbody tr:last-child td { border-bottom: 0; }
input[type="checkbox"] { appearance: none; display: block; width: 14px; height: 14px; margin: 0; border: 1px solid #687078; border-radius: 2px; background: #fff; }
.hbar { display: flex; align-items: center; height: 21px; background: #f1f1f1; }
.hbar .arrow { width: 20px; height: 100%; }
.hbar .thumb { flex: 1485; height: 17px; }
.hbar .rest { flex: 52; }

.awsfoot { display: flex; align-items: center; gap: 26px; height: 32px; padding: 0 16px; background: #232f3e; border-top: 1px solid #545b64; color: #fff; font-size: 11px; font-weight: 600; }
.awsfoot a { display: flex; align-items: center; gap: 6px; color: #fff; }
.awsfoot svg { width: 16px; height: 16px; }
.awsfoot .copyright { margin-left: auto; margin-right: 5px; }
.floater { position: absolute; right: 10px; bottom: 12px; width: 59px; height: 61px; display: flex; align-items: center; justify-content: center; border: 4px solid rgba(110, 116, 135, .25); border-radius: 10px; background: rgba(95, 102, 125, .42); background-clip: padding-box; -webkit-mask-image: linear-gradient(#000 75%, transparent); mask-image: linear-gradient(#000 75%, transparent); }
.floater svg { width: 28px; height: 34px; }

/* Taskbar */
.taskbar { display: flex; align-items: center; height: 60px; padding: 0 27px 0 18px; background: #dedbe9; border-top: 1px solid #c3c1cc; }
.app { position: relative; width: 55px; height: 50px; }
.start { width: 46px; }
.app svg { width: 30px; height: 30px; }
.tasksearch { display: flex; align-items: center; gap: 13px; width: 273px; height: 38px; margin-left: 9px; padding: 0 4px 0 14px; border-radius: 19px; background: #f4f3fa; box-shadow: 0 1px 1px #b9b6c6; }
.tasksearch input { flex: 1; font-size: 16px; }
.tasksearch input::placeholder { color: #4f4f55; opacity: 1; }
.apps { display: flex; margin-left: 3px; }
.badge { position: absolute; right: 8px; top: -2px; width: 20px; height: 20px; border-radius: 10px; background: #c42b1c; color: #fff; font-size: 14px; line-height: 20px; text-align: center; }
.run::after { content: ""; position: absolute; bottom: 0; left: 24px; width: 8px; height: 4px; border-radius: 2px; background: #84828c; }
.cur { background: linear-gradient(#efedf6, #efedf6) center / 48px 100% no-repeat; }
.cur::after { left: 18px; width: 20px; background: #0078d4; }
.red { background: linear-gradient(#fbe5e8, #fbe5e8) center / 50px 100% no-repeat; }
.red::after { background: #c42b1c; }
.skype { font: 700 20px "Open Sans", sans-serif; fill: #fff; }
.tray { display: flex; align-items: center; margin-left: auto; line-height: 20px; color: #1b1b1b; }
.lang { margin: 0 23px 0 26px; text-align: center; }
.lang, .clock { font-size: 14px; }
.status { display: flex; align-items: center; gap: 10px; margin-right: 20px; }
.clock { text-align: right; margin-right: 14px; }
```
